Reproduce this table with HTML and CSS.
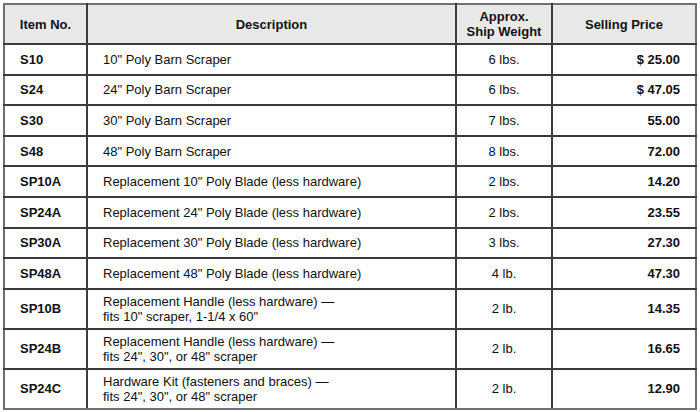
FILE: index.html
```html
<!DOCTYPE html>
<html>
<head>
<meta charset="utf-8">
<link rel="stylesheet" href="styles.css">
</head>
<body>
<div class="wrap">
<table class="price-table">
  <colgroup>
    <col class="c-item">
    <col class="c-desc">
    <col class="c-weight">
    <col class="c-price">
  </colgroup>
  <thead>
    <tr class="head-row">
      <th>Item No.</th>
      <th>Description</th>
      <th>Approx.<br>Ship Weight</th>
      <th>Selling Price</th>
    </tr>
  </thead>
  <tbody>
    <tr class="row"><td class="item">S10</td><td class="desc">10" Poly Barn Scraper</td><td class="weight">6 lbs.</td><td class="price">$ 25.00</td></tr>
    <tr class="row"><td class="item">S24</td><td class="desc">24" Poly Barn Scraper</td><td class="weight">6 lbs.</td><td class="price">$ 47.05</td></tr>
    <tr class="row"><td class="item">S30</td><td class="desc">30" Poly Barn Scraper</td><td class="weight">7 lbs.</td><td class="price">55.00</td></tr>
    <tr class="row"><td class="item">S48</td><td class="desc">48" Poly Barn Scraper</td><td class="weight">8 lbs.</td><td class="price">72.00</td></tr>
    <tr class="row"><td class="item">SP10A</td><td class="desc">Replacement 10" Poly Blade (less hardware)</td><td class="weight">2 lbs.</td><td class="price">14.20</td></tr>
    <tr class="row"><td class="item">SP24A</td><td class="desc">Replacement 24" Poly Blade (less hardware)</td><td class="weight">2 lbs.</td><td class="price">23.55</td></tr>
    <tr class="row"><td class="item">SP30A</td><td class="desc">Replacement 30" Poly Blade (less hardware)</td><td class="weight">3 lbs.</td><td class="price">27.30</td></tr>
    <tr class="row"><td class="item">SP48A</td><td class="desc">Replacement 48" Poly Blade (less hardware)</td><td class="weight">4 lb.</td><td class="price">47.30</td></tr>
    <tr class="row2"><td class="item">SP10B</td><td class="desc">Replacement Handle (less hardware) —<br>fits 10" scraper, 1-1/4 x 60"</td><td class="weight">2 lb.</td><td class="price">14.35</td></tr>
    <tr class="row2"><td class="item">SP24B</td><td class="desc">Replacement Handle (less hardware) —<br>fits 24", 30", or 48" scraper</td><td class="weight">2 lb.</td><td class="price">16.65</td></tr>
    <tr class="row2"><td class="item">SP24C</td><td class="desc">Hardware Kit (fasteners and braces) —<br>fits 24", 30", or 48" scraper</td><td class="weight">2 lb.</td><td class="price">12.90</td></tr>
  </tbody>
</table>
</div>
</body>
</html>
```
FILE: styles.css
```css
html, body {
  margin: 0;
  padding: 0;
  background: #ffffff;
}
.wrap {
  padding: 3px 3px 0 3px;
}
.price-table {
  width: 692px;
  table-layout: fixed;
  border-collapse: collapse;
  font-family: "Liberation Sans", Arial, sans-serif;
  font-size: 13px;
  color: #111;
  border: 2px solid #707070;
}
.c-item { width: 83px; }
.c-desc { width: 369px; }
.c-weight { width: 96px; }
.c-price { width: 144px; }
.price-table th,
.price-table td {
  border: 2px solid #3c3c3c;
  padding: 0;
  line-height: 15px;
  vertical-align: middle;
}
.price-table tr > :first-child { border-left-color: #707070; }
.price-table tr > :last-child { border-right-color: #707070; }
.price-table thead th { border-top-color: #707070; }
.price-table tbody tr:last-child td { border-bottom-color: #707070; }
.head-row {
  height: 40px;
  background: #e9e9e9;
}
.head-row th {
  font-weight: bold;
  text-align: center;
  color: #111;
}
.row { height: 30.6px; }
.row2 { height: 40px; }
.item {
  font-weight: bold;
  padding-left: 15px !important;
}
.desc {
  padding-left: 15px !important;
}
.weight {
  text-align: center;
}
.price {
  font-weight: bold;
  text-align: right;
  padding-right: 15px !important;
}
```
